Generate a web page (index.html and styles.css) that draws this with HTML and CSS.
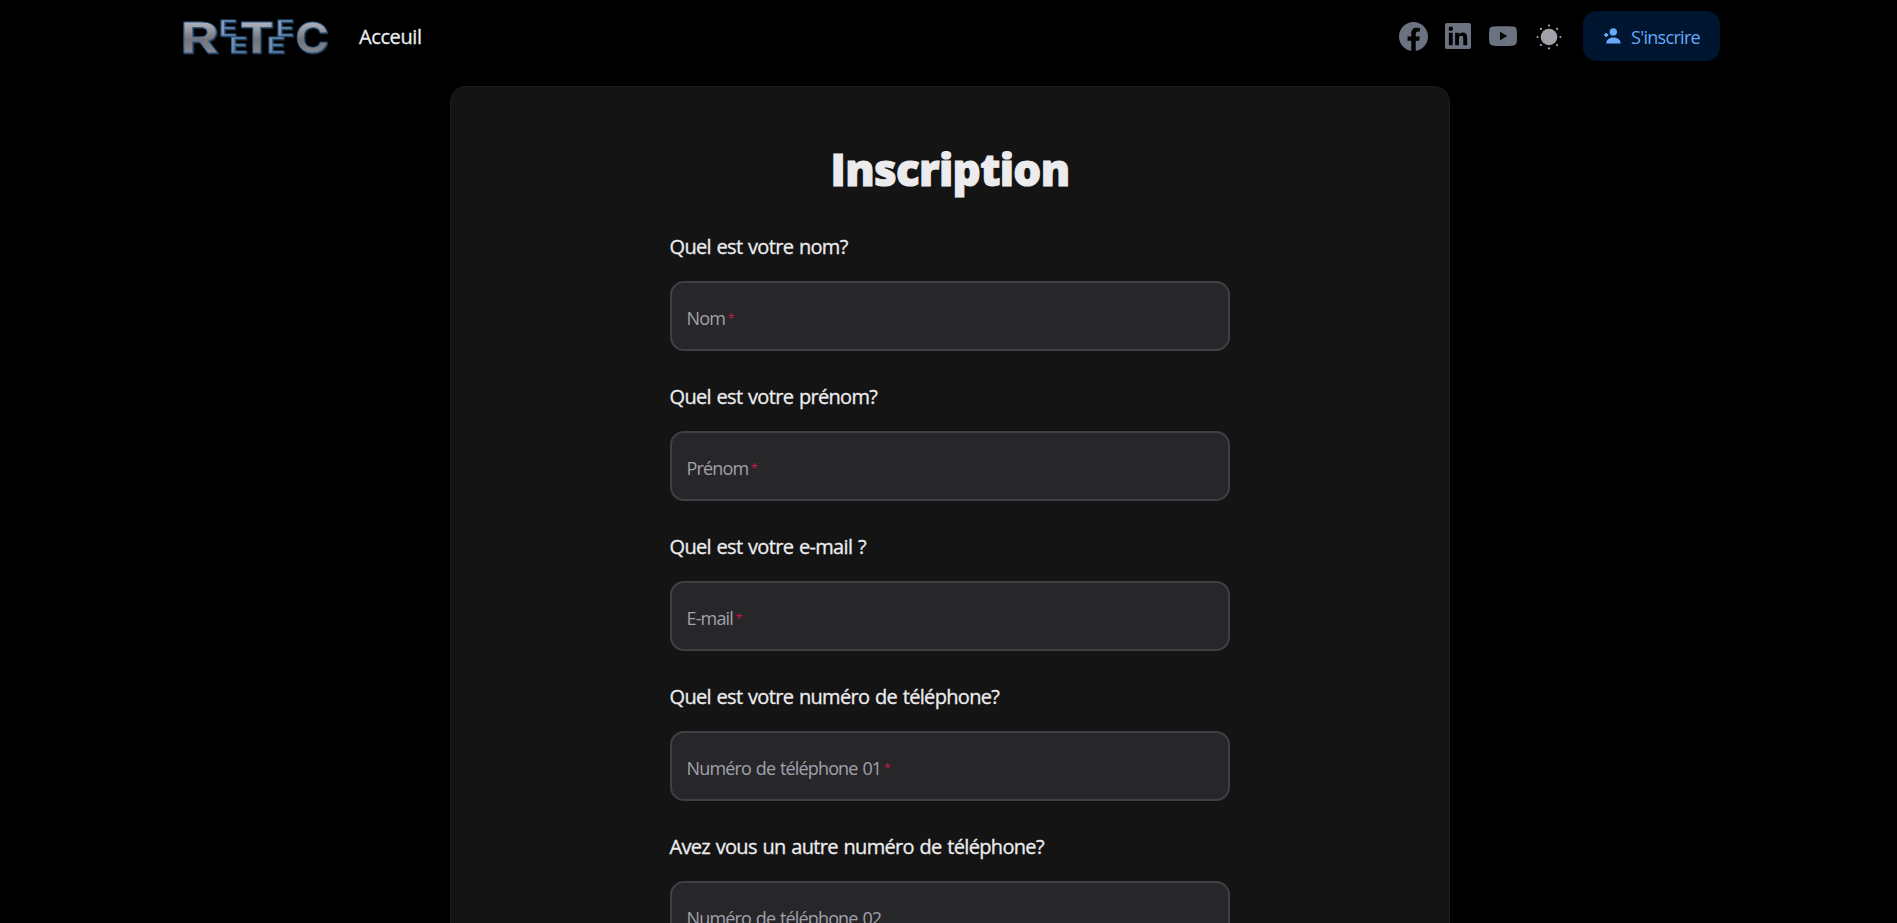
FILE: index.html
```html
<!DOCTYPE html>
<html lang="fr">
<head>
<meta charset="utf-8">
<title>Inscription</title>
<link rel="stylesheet" href="styles.css">
</head>
<body>
<header class="navbar">
  <div class="brand">
    <svg class="logo" viewBox="0 0 150 72" width="150" height="72" aria-label="ReTeC">
      <defs>
        <linearGradient id="steel" gradientUnits="userSpaceOnUse" x1="0" y1="20" x2="0" y2="53">
          <stop offset="0" stop-color="#b8bac6"/>
          <stop offset="0.6" stop-color="#72747c"/>
          <stop offset="1" stop-color="#85868f"/>
        </linearGradient>
        <linearGradient id="bluesteel" gradientUnits="userSpaceOnUse" x1="0" y1="20" x2="0" y2="53">
          <stop offset="0" stop-color="#8fa3c0"/>
          <stop offset="1" stop-color="#6f88a6"/>
        </linearGradient>
      </defs>
      <g class="logo-face">
        <text class="big" x="0" y="52.500" textLength="39" lengthAdjust="spacingAndGlyphs">R</text>
        <text class="small" x="38.500" y="35.500" textLength="19" lengthAdjust="spacingAndGlyphs">E</text>
        <text class="small" x="49" y="52.500" textLength="19" lengthAdjust="spacingAndGlyphs">E</text>
        <text class="big" x="59.500" y="52.500" textLength="34.500" lengthAdjust="spacingAndGlyphs">T</text>
        <text class="small" x="86.500" y="52.500" textLength="19" lengthAdjust="spacingAndGlyphs">E</text>
        <text class="small" x="95.500" y="35.500" textLength="19" lengthAdjust="spacingAndGlyphs">E</text>
        <text class="big" x="115" y="52.500" textLength="34" lengthAdjust="spacingAndGlyphs">C</text>
      </g>
    </svg>
    <a class="nav-link">Acceuil</a>
  </div>
  <div class="actions">
    <svg class="icon facebook" viewBox="0 0 24 24"><path d="M24 12.07C24 5.4 18.63 0 12 0S0 5.4 0 12.07C0 18.1 4.39 23.1 10.13 24v-8.44H7.08v-3.49h3.05V9.41c0-3.02 1.79-4.69 4.53-4.69 1.31 0 2.68.24 2.68.24v2.97h-1.51c-1.49 0-1.96.93-1.96 1.89v2.25h3.33l-.53 3.49h-2.8V24C19.61 23.1 24 18.1 24 12.07z"/></svg>
    <svg class="icon linkedin" viewBox="0 0 24 24"><path d="M22.22 0H1.77C.8 0 0 .77 0 1.73v20.54C0 23.23.8 24 1.77 24h20.45c.98 0 1.78-.77 1.78-1.73V1.73C24 .77 23.2 0 22.22 0zM7.12 20.45H3.56V9h3.56v11.45zM5.34 7.43a2.06 2.06 0 1 1 0-4.13 2.06 2.06 0 0 1 0 4.13zM20.45 20.45h-3.56v-5.57c0-1.33-.03-3.04-1.85-3.04-1.85 0-2.14 1.45-2.14 2.94v5.67H9.35V9h3.41v1.56h.05c.48-.9 1.64-1.85 3.37-1.85 3.6 0 4.27 2.37 4.27 5.46v6.28z"/></svg>
    <svg class="icon youtube" viewBox="0 0 28 20"><path fill-rule="evenodd" d="M3.5.6C8 0 20 0 24.500.6 26.500.9 27.500 2 27.700 4c.4 4 .4 8 0 12-.2 2-1.200 3.100-3.200 3.400-4.500.8-16.500.8-21 0C1.500 19.100.5 18 .3 16c-.4-4-.4-8 0-12C.5 2 1.500.9 3.500.6zM11 5.700v8.600l7.200-4.300z"/></svg>
    <svg class="icon sun" viewBox="0 0 26 26"><circle cx="13" cy="13" r="8.300"/><circle cx="13" cy="1.600" r="1.100"/><circle cx="13" cy="24.400" r="1.100"/><circle cx="1.600" cy="13" r="1.100"/><circle cx="24.400" cy="13" r="1.100"/><circle cx="4.900" cy="4.900" r="1.100"/><circle cx="21.100" cy="4.900" r="1.100"/><circle cx="4.900" cy="21.100" r="1.100"/><circle cx="21.100" cy="21.100" r="1.100"/></svg>
    <button class="signup">
      <svg class="user" viewBox="0 0 17 16"><circle cx="9.300" cy="3.900" r="3.700"/><path d="M2.200 15.500c0-3.500 3-6 7.200-6s7.200 2.500 7.200 6z"/><path class="plus" d="M2.200 5v4M.2 7h4"/></svg>
      <span>S'inscrire</span>
    </button>
  </div>
</header>
<main class="card">
  <h1 class="title"><span>Inscription</span></h1>
  <form class="form">
    <div class="field"><label class="question"><span>Quel est votre nom?</span></label><div class="input"><span class="hint">Nom</span><span class="required">*</span></div></div>
    <div class="field"><label class="question"><span>Quel est votre prénom?</span></label><div class="input"><span class="hint">Prénom</span><span class="required">*</span></div></div>
    <div class="field"><label class="question"><span>Quel est votre e-mail ?</span></label><div class="input"><span class="hint">E-mail</span><span class="required">*</span></div></div>
    <div class="field"><label class="question"><span>Quel est votre numéro de téléphone?</span></label><div class="input"><span class="hint">Numéro de téléphone 01</span><span class="required">*</span></div></div>
    <div class="field"><label class="question"><span>Avez vous un autre numéro de téléphone?</span></label><div class="input"><span class="hint">Numéro de téléphone 02</span></div></div>
  </form>
</main>
</body>
</html>
```
FILE: styles.css
```css
* { box-sizing: border-box; }
body {
  margin: 0;
  height: 923px;
  overflow: hidden;
  background: #000;
  color: #ececee;
  font-family: "Open Sans", "Noto Sans", sans-serif;
}
.navbar {
  display: flex;
  justify-content: space-between;
  align-items: center;
  height: 72px;
  padding: 0 177px 0 180px;
}
.brand { display: flex; align-items: center; gap: 29px; }
.logo { display: block; overflow: visible; }
.big, .small { font-family: Inter, sans-serif; }
.big { font-size: 43px; font-weight: 700; }
.small { font-size: 21px; font-weight: 500; fill: url(#bluesteel); }
.logo-face {
  fill: url(#steel);
  stroke: #2f5f8c;
  stroke-width: 0.8;
  filter: drop-shadow(1.5px 1px 0 #1c2c3c);
}
.nav-link {
  font-size: 20px;
  line-height: 28px;
  font-weight: 500;
  letter-spacing: -0.4px;
  padding-top: 2px;
  -webkit-text-stroke: 0.3px #ececee;
  white-space: nowrap;
}
.actions { display: flex; align-items: center; }
.icon { display: block; fill: #6b7280; }
.facebook { width: 29px; height: 29px; margin-right: 17.5px; }
.linkedin { width: 26px; height: 26px; margin-right: 18px; }
.youtube { width: 28px; height: 20px; margin-right: 19px; }
.sun { width: 26px; height: 26px; margin-right: 21px; margin-top: 1px; fill: #a1a1aa; }
.signup {
  display: flex;
  align-items: center;
  gap: 10px;
  width: 137px;
  height: 50px;
  padding: 1px 0 0 21px;
  border: 0;
  border-radius: 14px;
  background: #001630;
  color: #66aaf9;
  font: 400 18px/28px "Open Sans", "Noto Sans", sans-serif;
  letter-spacing: -0.7px;
  white-space: nowrap;
}
.user { width: 17px; height: 16px; fill: #66aaf9; flex: none; margin-top: -2px; }
.plus { fill: none; stroke: #66aaf9; stroke-width: 1.800; }
.card {
  width: 1000px;
  height: 837px;
  margin: 14px 0 0 450px;
  padding: 52px 219px 0;
  border: 1px solid #1c1c1e;
  border-bottom: 0;
  border-radius: 16px 16px 0 0;
  background: #141414;
  overflow: hidden;
}
.title {
  margin: 0;
  height: 60px;
  font-size: 44px;
  line-height: 60px;
  font-weight: 800;
  letter-spacing: -0.7px;
  -webkit-text-stroke: 1px #ececee;
  text-align: center;
}
.form { margin-top: 34px; }
.field { height: 150px; }
.question {
  display: block;
  height: 48px;
  margin-left: -0.5px;
  font-size: 20px;
  line-height: 28px;
  font-weight: 500;
  letter-spacing: -0.67px;
  word-spacing: 1.100px;
  -webkit-text-stroke: 0.3px #ececee;
  white-space: nowrap;
}
.input {
  display: flex;
  align-items: center;
  height: 70px;
  padding: 3px 14.5px 0;
  border: 2px solid #3f3f46;
  border-radius: 14px;
  background: #27272a;
  color: #a1a1aa;
  font-size: 18px;
  line-height: 28px;
}
.hint { letter-spacing: -0.85px; word-spacing: 1px; }
.required { margin-left: 2.5px; color: #f31260; font-size: 13px; font-weight: 300; }
```
